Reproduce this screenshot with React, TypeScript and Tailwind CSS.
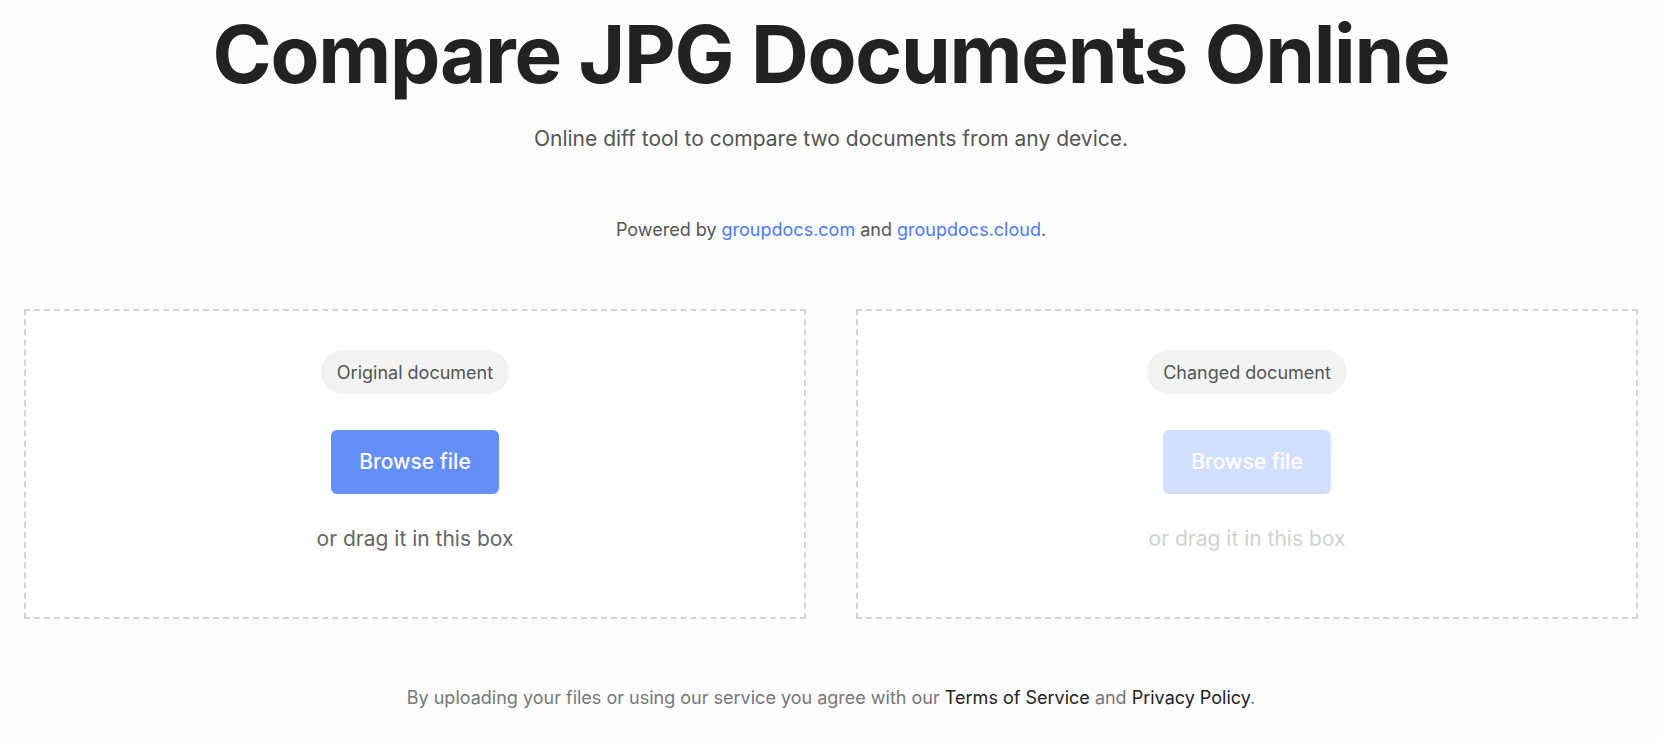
import React from 'react';

function DropBox({ label, disabled }: { label: string; disabled?: boolean }) {
  return (
    <div className="flex h-[310px] flex-col items-center border-2 border-dashed border-[#d4d4d4] bg-white pt-[39px]">
      <div className="flex h-[44px] items-center rounded-full bg-[#f3f3f3] px-4 text-[18px] text-[#555]">
        {label}
      </div>
      <button
        type="button"
        className={
          disabled
            ? 'mt-[36px] h-[64px] w-[168px] rounded-md bg-[#d2dffc] text-[21px] font-medium text-white'
            : 'mt-[36px] h-[64px] w-[168px] rounded-md bg-[#648ff7] text-[21px] font-medium text-white'
        }
      >
        Browse file
      </button>
      <p
        className={
          disabled
            ? 'mt-[31px] text-[21px] leading-[28px] text-[#d2d2d2]'
            : 'mt-[31px] text-[21px] leading-[28px] text-[#666]'
        }
      >
        or drag it in this box
      </p>
    </div>
  );
}

export default function App() {
  return (
    <main className="min-h-screen bg-[#fcfcfc] px-[24px] font-['Inter',sans-serif]">
      <h1 className="pt-[14px] text-center text-[80px] font-bold leading-[80px] tracking-[-0.016em] text-[#222]">
        Compare JPG Documents Online
      </h1>
      <p className="mt-[31px] text-center text-[21px] leading-[28px] text-[#555]">
        Online diff tool to compare two documents from any device.
      </p>
      <p className="mt-[65px] text-center text-[18px] leading-[24px] text-[#555]">
        Powered by <a className="text-[#4a7cf0]">groupdocs.com</a> and{' '}
        <a className="text-[#4a7cf0]">groupdocs.cloud</a>.
      </p>
      <div className="mt-[67px] grid grid-cols-2 gap-[50px]">
        <DropBox label="Original document" />
        <DropBox label="Changed document" disabled />
      </div>
      <p className="mt-[67px] text-center text-[18px] leading-[24px] text-[#777]">
        By uploading your files or using our service you agree with our{' '}
        <a className="text-[#222]">Terms of Service</a> and <a className="text-[#222]">Privacy Policy</a>.
      </p>
    </main>
  );
}
